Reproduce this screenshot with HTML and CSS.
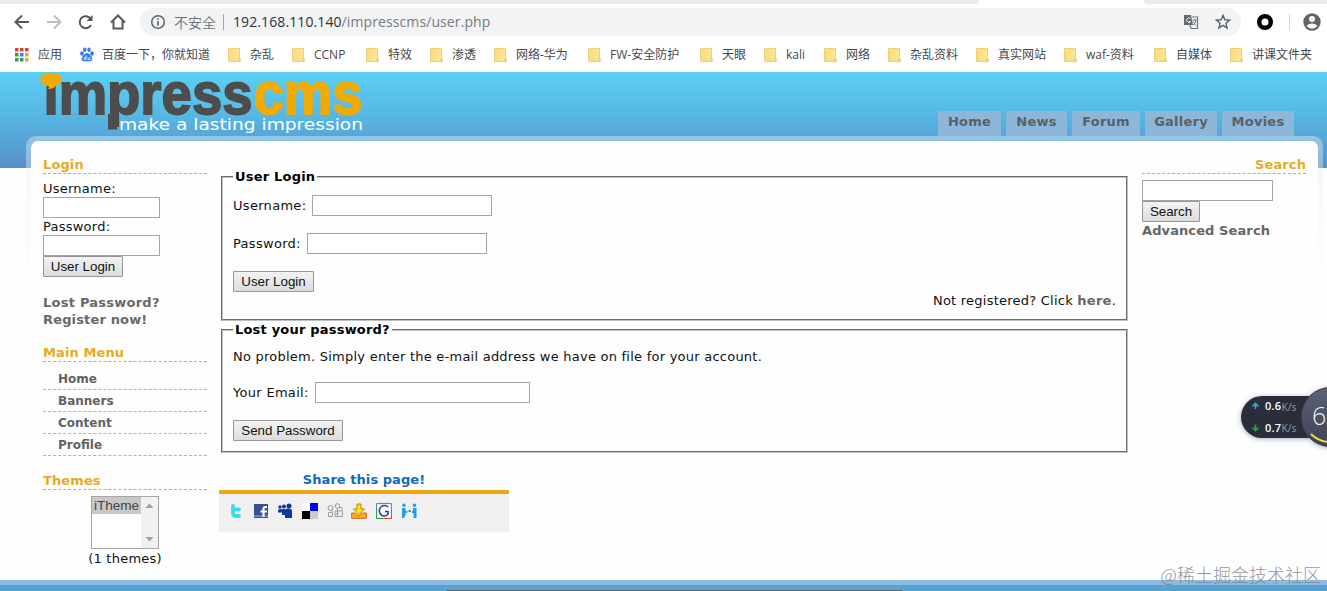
FILE: index.html
```html
<!DOCTYPE html>
<html lang="zh-CN">
<head>
<meta charset="utf-8">
<title>ImpressCMS</title>
<link rel="stylesheet" href="styles.css">
</head>
<body>
<svg class="defs" width="0" height="0">
  <defs>
    <linearGradient id="paper" x1="0" x2="1"><stop offset="0" stop-color="#fadb80"/><stop offset="1" stop-color="#ffe694"/></linearGradient>
    <symbol id="folder" viewBox="0 0 14 16"><path d="M.5 1.500h11v9l1 3v1H.5z" fill="url(#paper)" stroke="#ead07a"/><path d="M10.500 14.500v-2l1-2 1 3v1z" fill="#f5cf62"/></symbol>
  </defs>
</svg>
<div class="tabstrip"><i class="tab-left"></i><i class="tab-active"></i><i class="tab-right"></i></div>
<div class="toolbar">
  <svg class="navicons" width="130" height="32" viewBox="0 0 130 32" fill="none" stroke="#55585c" stroke-width="2">
    <path d="M29 16H16M22 9.500 15.500 16l6.500 6.500"/>
    <path d="M47 16h13M54 9.500l6.500 6.500-6.500 6.500" stroke="#bcbec0"/>
    <path d="M91 19a6 6 0 1 1-.3-6.200"/><path d="M92.500 9v6h-6z" fill="#55585c" stroke="none"/>
    <path d="M111 16.500l7-7 7 7M113.500 15v7.500h9V15"/>
  </svg>
  <div class="omnibox">
    <svg width="16" height="16" viewBox="0 0 16 16" fill="none" stroke="#5f6368" stroke-width="1.500"><circle cx="8" cy="8" r="6.300"/><path d="M8 7v4.500M8 4.300v1.500" stroke-width="1.700"/></svg>
    <span class="insecure">不安全</span><i class="divider"></i>
    <span class="url"><b>192.168.110.140</b>/impresscms/user.php</span>
    <svg class="right-icons" width="50" height="18" viewBox="0 0 50 18"><path d="M1 2h7l2 10H1z" fill="#66696d"/><path d="M9 4h5.500v11.500H8L7 12" fill="none" stroke="#74777a" stroke-width="1.200"/><path d="M7.500 5.500a2.300 2.300 0 1 0 .3 3H6" fill="none" stroke="#eee"/><path d="M9.500 7h4M11.500 6v1M13 7q0 3-3 5M10 8.500l3 4" fill="none" stroke="#777"/><path d="M40 2.300l1.800 4.500 4.800.3-3.700 3.100 1.200 4.700L40 12.300l-4.100 2.600 1.200-4.700-3.700-3.100 4.800-.3z" fill="none" stroke="#5f6368" stroke-width="1.400"/></svg>
  </div>
  <svg class="profile-icons" width="76" height="24" viewBox="0 0 76 24"><circle cx="14" cy="12" r="5.800" fill="#fff" stroke="#000" stroke-width="4.500"/><path d="M38.500 4v16" stroke="#d0d2d5"/><circle cx="61" cy="12" r="8.700" fill="#5f6368"/><circle cx="61" cy="9" r="3" fill="#fff"/><path d="M55.500 16c2-3.500 9-3.500 11 0a7 7 0 0 1-11 0" fill="#fff"/></svg>
</div>
<div class="bookmarks">
  <span class="apps"><svg width="14" height="14" viewBox="0 0 14 14"><path d="M0 0h3.500v3.500H0zM5 0h3.500v3.500H5zM10 0h3.500v3.500H10z" fill="#da453b"/><path d="M0 5h3.500v3.500H0zM0 10h3.500v3.500H0zM5 10h3.500v3.500H5z" fill="#36985c"/><path d="M5 5h3.500v3.500H5z" fill="#3f7ee8"/><path d="M10 5h3.500v3.500H10zM10 10h3.500v3.500H10z" fill="#dca83b"/></svg>应用</span>
  <span><svg width="14" height="15" viewBox="0 0 14 15" fill="#2f7df0"><ellipse cx="2" cy="6.500" rx="1.800" ry="2.200"/><ellipse cx="4.800" cy="2.700" rx="1.700" ry="2.300"/><ellipse cx="9" cy="2.700" rx="1.700" ry="2.300"/><ellipse cx="12" cy="6.500" rx="1.800" ry="2.200"/><path d="M7 6c2 0 3 2 4.500 3.500C13 11.500 12 14.300 9.700 14.300 8 14.300 6 14 4.500 14.300 1.500 14.800 1 11.500 2.500 9.500 4 8 5 6 7 6z"/><path d="M6 8.500v4H4.500q-1-1 0-2H6M8 10v2.500h2V10" fill="none" stroke="#fff" stroke-width=".8"/></svg>百度一下，你就知道</span>
  <span><svg width="14" height="16"><use href="#folder"/></svg>杂乱</span>
  <span><svg width="14" height="16"><use href="#folder"/></svg>CCNP</span>
  <span><svg width="14" height="16"><use href="#folder"/></svg>特效</span>
  <span><svg width="14" height="16"><use href="#folder"/></svg>渗透</span>
  <span><svg width="14" height="16"><use href="#folder"/></svg>网络-华为</span>
  <span><svg width="14" height="16"><use href="#folder"/></svg>FW-安全防护</span>
  <span><svg width="14" height="16"><use href="#folder"/></svg>天眼</span>
  <span><svg width="14" height="16"><use href="#folder"/></svg>kali</span>
  <span><svg width="14" height="16"><use href="#folder"/></svg>网络</span>
  <span><svg width="14" height="16"><use href="#folder"/></svg>杂乱资料</span>
  <span><svg width="14" height="16"><use href="#folder"/></svg>真实网站</span>
  <span><svg width="14" height="16"><use href="#folder"/></svg>waf-资料</span>
  <span><svg width="14" height="16"><use href="#folder"/></svg>自媒体</span>
  <span><svg width="14" height="16"><use href="#folder"/></svg>讲课文件夹</span>
</div>
<div class="site">
  <header class="header">
    <svg class="logo" width="330" height="64" viewBox="38 72 330 64">
      <g font-family="Liberation Sans" font-weight="bold" font-size="59" stroke-width="1.800">
        <text x="43.500" y="114" fill="#4d4d4d" stroke="#4d4d4d" textLength="209" lengthAdjust="spacingAndGlyphs">ımpress</text>
        <text x="253.500" y="114" fill="#f0aa00" stroke="#f0aa00" textLength="109" lengthAdjust="spacingAndGlyphs">cms</text>
      </g>
      <ellipse cx="51" cy="79.500" rx="11" ry="6.800" fill="#f0aa00"/>
      <path d="M47 85h9c-1 3-4 4-8 4 1.500-1 1.500-3-1-4z" fill="#f0aa00"/>
      <path d="M108 114h9v15.500h-9z" fill="#4d4d4d"/>
      <text x="119" y="129.500" font-family="DejaVu Sans" font-size="15" fill="#fff" textLength="244" lengthAdjust="spacingAndGlyphs">make a lasting impression</text>
    </svg>
    <nav class="nav"><a class="n1">Home</a><a class="n2">News</a><a class="n3">Forum</a><a class="n4">Gallery</a><a class="n5">Movies</a></nav>
  </header>
  <div class="frame"><div class="panel">
    <aside class="side">
      <h2>Login</h2>
      <div class="login"><label>Username:</label><input class="w-side"><label>Password:</label><input class="w-side" type="password"><button class="b-login">User Login</button></div>
      <div class="links"><a>Lost Password?</a><a class="reg">Register now!</a></div>
      <h2 class="h-menu">Main Menu</h2>
      <ul class="menu"><li>Home</li><li>Banners</li><li>Content</li><li>Profile</li></ul>
      <h2 class="h-themes">Themes</h2>
      <div class="themes">
        <div class="listbox"><span class="option">iTheme</span><span class="scroll"><svg width="17" height="51" viewBox="0 0 17 51" fill="#a3a3a3"><path d="M4.500 11h8l-4-4.500zM4.500 40h8l-4 4.500z"/></svg></span></div>
        <div class="count">(1 themes)</div>
      </div>
    </aside>
    <main class="main">
      <fieldset class="fs1"><legend>User Login</legend>
        <div class="row r1"><span class="t-user">Username:</span><input class="w-main"></div>
        <div class="row r2"><span class="t-pass">Password:</span><input class="w-main" type="password"></div>
        <button class="b-main">User Login</button>
        <p class="notreg">Not registered? Click <b>here</b>.</p>
      </fieldset>
      <fieldset class="fs2"><legend class="lg2">Lost your password?</legend>
        <p class="noprob">No problem. Simply enter the e-mail address we have on file for your account.</p>
        <div class="row r3"><span class="t-mail">Your Email:</span><input class="w-mail"></div>
        <button class="b-send">Send Password</button>
      </fieldset>
      <section class="share">
        <h3>Share this page!</h3>
        <div class="icons">
          <svg width="16" height="16" viewBox="0 0 16 16"><path d="M5 3v7q0 3 3 3h3M5 6.500h6" fill="none" stroke="#38dcf0" stroke-width="3.800" stroke-linecap="round"/></svg>
          <svg width="16" height="16" viewBox="0 0 16 16"><path d="M1 1h14v14H1z" fill="#37528f"/><path d="M1 12h14v2H1z" fill="#6f85b5"/><path d="M14 4h-1.500q-2 0-2 2v8M7.500 8.500H14" fill="none" stroke="#fff" stroke-width="2.200"/></svg>
          <svg width="16" height="16" viewBox="0 0 16 16" fill="#0b3b9d"><circle cx="3" cy="4" r="1.700"/><circle cx="7" cy="3.500" r="2"/><circle cx="12" cy="3" r="2.500"/><path d="M1 8q0-2 2-2 1 0 1.500.5Q6 5 8 6.500 9 5.500 12 5.500q3 0 3 3V15H8v-3H5V9.500H1z"/></svg>
          <svg width="16" height="16"><path fill="#fff" d="M0 0h8v8H0z"/><path fill="#00f" d="M8 0h8v8H8z"/><path d="M0 8h8v8H0z"/><path fill="#ccc" d="M8 8h8v8H8z"/></svg>
          <svg width="16" height="16" viewBox="0 0 16 16" fill="#eee" stroke="#999"><circle cx="3.500" cy="5" r="2.500"/><circle cx="10.500" cy="3" r="2.300"/><path d="M1.500 13.500v-4h4v4zM8 8h7.500v5.500H8zM10.500 5v8M12 4.500h3v3M5 7v2M8 11h4" stroke-width=".9"/></svg>
          <svg width="16" height="16" viewBox="0 0 16 16"><path d="M.7 10h3l4 3 4-3h3.600v5.300H.7z" fill="#ffac16" stroke="#c66e17"/><path d="M6 1h4v5h3.500L8 11.500 2.500 6H6z" fill="#ffe70b" stroke="#c77b0c"/></svg>
          <svg width="16" height="16" viewBox="0 0 16 16"><path d="M.6.600h14.800v14.800H.6z" fill="#f8faff" stroke="#5577b8"/><path d="M.5 5v10.500H7" fill="none" stroke="#399850"/><path d="M15.500 7v8.500H8" fill="none" stroke="#e04a38"/><path d="M12.300 4Q9.500 1.500 6 3 2 6 4 10.500 7 15 12 11.500V8.500H9" fill="none" stroke="#233e95" stroke-width="1.500"/></svg>
          <svg width="16" height="16" viewBox="0 0 16 16" fill="#1f9de5"><circle cx="3" cy="2.200" r="1.700"/><circle cx="13.500" cy="2.200" r="1.700"/><path d="M1 5h3.500v3h1v2h-1v3H3.500v2H1zM12 5h3.500v10H12.500v-5H11V8h1z"/><path d="M5 8h1.500v1.500H5zM7.500 7H10v2H7.500z"/></svg>
        </div>
      </section>
    </main>
    <aside class="right">
      <h2>Search</h2>
      <input class="w-search"><button class="b-search">Search</button><a>Advanced Search</a>
    </aside>
  </div></div>
  <footer class="footer"><i></i></footer>
</div>
<svg class="meter" width="100" height="76" viewBox="1227 378 100 76">
  <defs><filter id="glow" x="-20%" y="-30%" width="140%" height="160%"><feDropShadow dx="0" dy="1" stdDeviation="2.500" flood-color="#36456c" flood-opacity=".45"/></filter><linearGradient id="ball" x2="0" y2="1"><stop stop-color="#5c6175"/><stop offset="1" stop-color="#3e4352"/></linearGradient></defs>
  <g filter="url(#glow)"><rect x="1241" y="396" width="100" height="42" rx="21" fill="#2b2f3b"/><circle cx="1330.500" cy="417" r="29.500" fill="url(#ball)" stroke="#343844"/></g>
  <path d="M1255.500 409v-5M1252.500 406.500l3-3 3 3" fill="none" stroke="#35a9df" stroke-width="1.600"/>
  <path d="M1255.500 424.500v5M1252.500 427.500l3 3 3-3" fill="none" stroke="#2aa638" stroke-width="1.600"/>
  <g font-family="Open Sans" font-size="11"><text x="1265" y="410" fill="#fff" font-weight="600" textLength="16">0.6</text><text x="1265" y="432" fill="#fff" font-weight="600" textLength="16">0.7</text><text x="1281.500" y="411" fill="#969aa5" font-size="10" textLength="15" lengthAdjust="spacingAndGlyphs">K/s</text><text x="1281.500" y="432" fill="#969aa5" font-size="10" textLength="15" lengthAdjust="spacingAndGlyphs">K/s</text></g>
  <text x="1312" y="425" font-family="Open Sans" font-weight="300" font-size="25" fill="#eef0f5">6</text>
  <path d="M1311 434q7 7 17 8" fill="none" stroke="#f4d94b" stroke-width="1.800"/>
</svg>
<div class="watermark">@稀土掘金技术社区</div>
</body>
</html>
```
FILE: styles.css
```css
* { box-sizing: border-box; }
html, body { height: 591px; overflow: hidden; }
body { margin: 0; display: flex; flex-direction: column; background: #fefefe; font: 13px/17px "DejaVu Sans", Verdana, sans-serif; letter-spacing: .24px; color: #111; position: relative; }
h2, h3, p, ul, fieldset { margin: 0; padding: 0; }
svg { display: block; flex: none; overflow: visible; letter-spacing: 0; }
.defs { position: absolute; }

/* browser chrome */
.tabstrip { height: 4px; flex: none; display: flex; background: #fff; }
.tab-left { width: 979px; background: #e8eaed; border-bottom-right-radius: 4px; }
.tab-active { width: 165px; }
.tab-right { flex: 1; background: #e8eaed; border-bottom-left-radius: 4px; }
.toolbar { height: 36px; flex: none; display: flex; align-items: center; background: #fff; letter-spacing: 0; }
.navicons { margin-right: 10px; }
.omnibox { width: 1101px; height: 28px; border-radius: 14px; background: #f1f3f4; display: flex; align-items: center; padding-left: 10px; }
.insecure { margin-left: 8px; width: 44px; font: 350 14px/20px "Noto Sans CJK SC", sans-serif; color: #6b6e72; white-space: nowrap; }
.divider { width: 1px; height: 16px; margin: 0 9px 0 5px; background: #a5a8ab; }
.url { font: 14px/20px "Open Sans", sans-serif; letter-spacing: .1px; color: #777b80; }
.url b { font-weight: normal; color: #303236; }
.right-icons { margin-left: auto; margin-right: 8px; }
.profile-icons { margin-left: 10px; }
.bookmarks { height: 32px; flex: none; display: grid; align-items: center; padding: 0 0 3px 16px; background: #fff; grid-template-columns: 64px 148px 64px 74px 64px 64px 94px 112px 64px 60px 64px 88px 88px 90px 76px 97px; font: 400 12px/18px "Open Sans", "Noto Sans CJK SC", sans-serif; letter-spacing: 0; color: #46484b; }
.bookmarks span { display: flex; align-items: center; white-space: nowrap; gap: 8px; }
.bookmarks .apps { gap: 9px; }
.apps svg { margin-left: -1px; }

/* header */
.site { flex: 1; display: flex; flex-direction: column; background: linear-gradient(#5bd0f5, #57b7e4 45%, #5690c8) 0 0 / 100% 96px no-repeat; }
.header { height: 64px; flex: none; display: flex; justify-content: space-between; padding: 0 33px 0 38px; align-items: flex-end; }
.nav { display: flex; gap: 5px; }
.nav a { height: 25px; padding-top: 2px; text-align: center; font-weight: bold; color: #586169; background: #8db6d8; }
.n1 { width: 63px; } .n2 { width: 61px; } .n3 { width: 68px; } .n4 { width: 72px; } .n5 { width: 72px; }
.frame { height: 444px; flex: none; margin: 0 4px 0 26px; padding: 5px 5px 0; border-radius: 10px 10px 0 0; background: linear-gradient(rgba(255,255,255,.35) 32px, rgba(232,236,242,.35) 33px, #fefefe 160px); }
.panel { height: 439px; background: #fefefe; border-radius: 7px 7px 0 0; display: flex; padding-left: 12px; }

/* sidebars */
.side { width: 164px; padding-top: 15px; }
h2 { height: 18px; font-size: 13px; line-height: 17px; letter-spacing: .1px; color: #eaa91f; border-bottom: 1px dashed #91b4d4; }
.login { display: flex; flex-direction: column; align-items: flex-start; padding-top: 6px; }
.login label { height: 17px; }
input { height: 21px; margin: 0; padding: 1px; border: 1px solid #a5a5a5; background: #fff; }
.w-side { width: 117px; }
button { height: 21px; margin: 0; padding: 0; border: 1px solid #979797; border-radius: 1px; background: linear-gradient(#f3f3f3, #dcdcdc); font: 13.333px/18px "Liberation Sans", sans-serif; letter-spacing: 0; color: #111; }
.b-login { width: 80px; }
.links { margin-top: 17px; display: flex; flex-direction: column; font-weight: bold; color: #696969; }
.reg { letter-spacing: .15px; }
.h-menu { margin-top: 16px; }
.menu { list-style: none; padding-top: 6px; font-size: 12px; font-weight: bold; letter-spacing: 0; color: #626262; }
.menu li { height: 22px; padding: 3px 0 0 15px; line-height: 17px; border-bottom: 1px dashed #b4b4b4; }
.h-themes { margin-top: 16px; }
.themes { display: flex; flex-direction: column; align-items: center; padding-top: 6px; }
.listbox { width: 68px; height: 53px; border: 1px solid #a5a5a5; display: flex; background: #fff; font: 13.500px/17px "Liberation Sans", sans-serif; letter-spacing: 0; color: #444; }
.option { width: 49px; height: 17px; padding-left: 2px; background: #c8c8c8; }
.scroll { width: 17px; background: #f1f1f1; }
.count { margin-top: 1px; }

/* main column */
.main { width: 907px; margin-left: 14px; padding-top: 27px; }
fieldset { border: 2px groove #c0c0c0; min-width: 0; padding: 0 10px; }
legend { height: 17px; padding: 0 2px; font-weight: bold; letter-spacing: .2px; color: #000; }
.fs1 { height: 153px; }
.fs2 { height: 132px; }
.row { display: flex; align-items: center; height: 21px; }
.r1 { margin-top: 10px; } .r2 { margin-top: 17px; }
.t-user { width: 79px; } .t-pass { width: 74px; } .t-mail { width: 82px; }
.row span { letter-spacing: .3px; }
.w-main { width: 180px; } .w-mail { width: 215px; }
.b-main { display: block; margin-top: 17px; width: 81px; }
.notreg { text-align: right; }
.notreg b { color: #666; }
.noprob { padding-top: 10px; }
.r3 { margin-top: 17px; }
.b-send { display: block; margin-top: 17px; width: 110px; }
.share { width: 290px; margin: 18px 0 0 -2px; }
.share h3 { height: 19px; text-align: center; font-size: 13px; line-height: 17px; letter-spacing: .05px; color: #1269bd; }
.icons { height: 42px; border-top: 4px solid #eca711; background: #f0f0f0; display: flex; gap: 8.700px; padding: 9px 0 0 9px; }
.right { width: 164px; margin-left: 14px; padding-top: 15px; display: flex; flex-direction: column; align-items: flex-start; font-weight: bold; letter-spacing: .1px; color: #666; }
.right h2 { width: 100%; text-align: right; margin-bottom: 6px; }
.w-search { width: 131px; } .b-search { width: 58px; }

/* footer and overlays */
.footer { flex: 1; border-top: 5px solid #8bb9e2; background: #58a2d0; display: flex; align-items: flex-end; padding-left: 446px; }
.footer i { width: 456px; height: 1px; background: #5b666d; }
.meter { position: absolute; right: 0; top: 378px; overflow: hidden; }
.watermark { position: absolute; right: 6px; top: 562px; font: 300 18px/24px "Noto Sans CJK SC", sans-serif; letter-spacing: 0; color: rgba(125,130,135,.85); white-space: nowrap; }
```
